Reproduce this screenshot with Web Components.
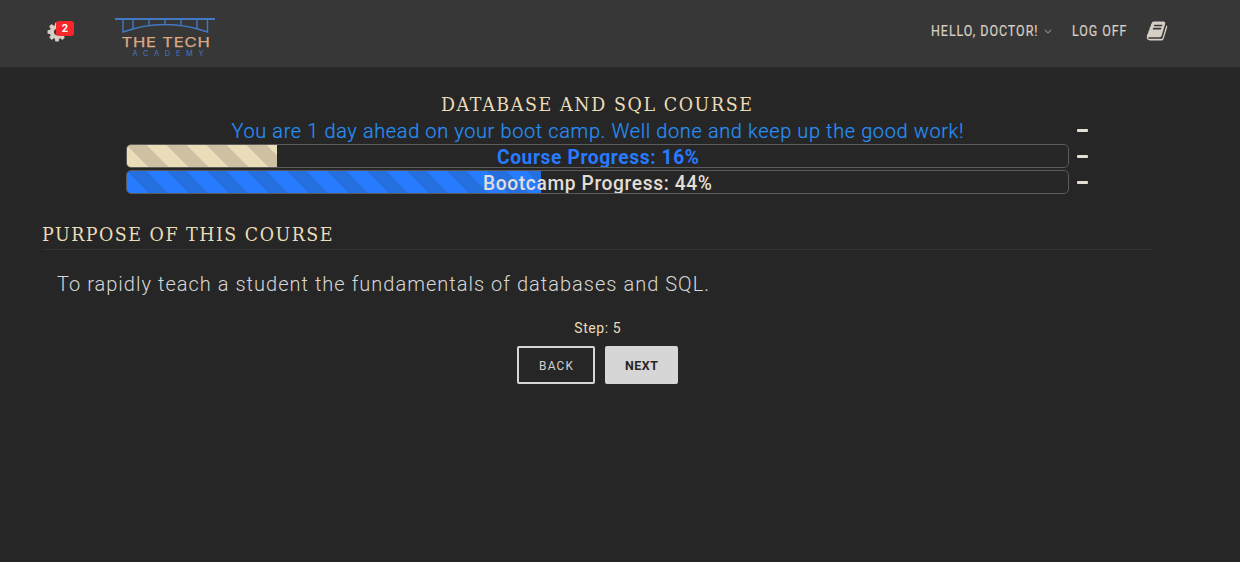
<!DOCTYPE html>
<html lang="en">
<head>
<meta charset="utf-8">
<title>Database and SQL Course</title>
<style>
html,body{margin:0;height:100%;background:#262626}
body{font-family:Roboto,"Liberation Sans",sans-serif;color:#d8d2c8}
</style>
</head>
<body>
<course-page></course-page>
<script>
const define = (name, html, setup) => customElements.define(name, class extends HTMLElement {
  connectedCallback() {
    if (this.shadowRoot) return;
    const t = document.createElement('template');
    t.innerHTML = html;
    this.attachShadow({mode: 'open'}).append(t.content.cloneNode(true));
    if (setup) setup(this, this.shadowRoot);
  }
});

/* Text tracked evenly to a given line width; "condense" narrows the glyphs */
define('tracked-text', `<style>:host{display:inline-block;white-space:nowrap}span{display:inline-block;transform-origin:0 50%}</style><span><slot></slot></span>`, (el, root) => {
  const span = root.querySelector('span'), w = +el.getAttribute('width');
  const s = +(el.getAttribute('condense') || 1);
  const n = el.textContent.length;
  const gap = (w / s - span.getBoundingClientRect().width) / (n - 1);
  span.style.letterSpacing = gap + 'px';
  if (s !== 1) span.style.transform = `scaleX(${s})`;
  el.style.width = w + 'px';
});

define('notice-gear', `<style>
:host{display:block;position:relative;width:28px;height:24px}
svg{display:block;width:22px;height:22px;margin-left:-1px;fill:#d8cfc4}
b{position:absolute;left:9px;top:0;width:18px;height:15px;border-radius:3px;background:#f9262a;color:#fff;font-size:11px;line-height:15px;text-align:center}
</style><svg viewBox="0 0 1792 1792"><path d="M1152 896q0-106-75-181t-181-75-181 75-75 181 75 181 181 75 181-75 75-181zm512-109v222q0 12-8 23t-20 13l-185 28q-19 54-39 91 35 50 107 138 10 12 10 25t-9 23q-27 37-99 108t-94 71q-12 0-26-9l-138-108q-44 23-91 38-16 136-29 186-7 28-36 28h-222q-14 0-24.500-8.500t-11.500-21.500l-28-184q-49-16-90-37l-141 107q-10 9-25 9-14 0-25-11-126-114-165-168-7-10-7-23 0-12 8-23 15-21 51-66.500t54-70.500q-27-50-41-99l-183-27q-13-2-21-12.500t-8-23.500v-222q0-12 8-23t19-13l186-28q14-46 39-92-40-57-107-138-10-12-10-24 0-10 9-23 26-36 98.500-107.500t94.500-71.500q13 0 26 10l138 107q44-23 91-38 16-136 29-186 7-28 36-28h222q14 0 24.500 8.500t11.500 21.500l28 184q49 16 90 37l142-107q9-9 24-9 13 0 25 10 129 119 165 170 7 8 7 22 0 12-8 23-15 21-51 66.500t-54 70.500q26 50 41 98l183 28q13 2 21 12.500t8 23.500z"/></svg><b><slot></slot></b>`);

define('academy-logo', `<style>
:host{display:block;width:100px;height:44px}
svg{display:block;overflow:visible}
</style><svg width="100" height="44" viewBox="0 0 100 44">
<g fill="none" stroke="#4279c4" stroke-width="1.400"><path d="M0 4H100" stroke-width="1.800"/><path d="M8 4V17Q50 2 92.500 17V4M18 4V13M34 4V10M50 4V9.500M66 4V10M82 4V13"/></g>
<text x="6.500" y="32" font-family="Inter,sans-serif" font-size="12.800" fill="#dba986" stroke="#dba986" stroke-width=".25" textLength="89" lengthAdjust="spacingAndGlyphs" letter-spacing=".6">THE TECH</text>
<text x="17.500" y="41" font-family="Inter,sans-serif" font-size="7.400" fill="#4279c4" textLength="71">ACADEMY</text>
</svg>`);

define('book-icon', `<style>:host{display:block}svg{display:block;fill:#d8cfc4}</style><svg width="22" height="22" viewBox="0 0 1792 1792"><path d="M1703 478q40 57 18 129l-275 906q-19 64-76.500 107.500t-122.500 43.500h-923q-77 0-148.500-53.500t-99.500-131.500q-24-67-2-127 0-4 3-27t4-37q1-8-3-21.500t-3-19.500q2-11 8-21t16.500-23.500 16.500-23.500q23-38 45-91.500t30-91.500q3-10 .5-30t-.5-28q3-11 17-28t17-23q21-36 42-92t25-90q1-9-2.500-32t.5-28q4-13 22-30.500t22-22.500q19-26 42.500-84.500t27.500-96.500q1-8-3-25.500t-2-26.500q2-8 9-18t18-23 17-21q8-12 16.500-30.500t15-35 16-36 19.500-32 26.500-23.500 36-11.500 47.500 5.500l-1 3q38-9 51-9h761q74 0 114 56t18 130l-274 906q-36 119-71.500 153.500t-128.500 34.500h-869q-27 0-38 15-11 16-1 43 24 70 144 70h923q29 0 56-15.500t35-41.500l300-987q7-22 5-57 38 15 59 43zm-1064 2q-4 13 2 22.500t20 9.500h608q13 0 25.500-9.500t16.500-22.500l21-64q4-13-2-22.500t-20-9.500h-608q-13 0-25.500 9.500t-16.500 22.500zm-83 256q-4 13 2 22.500t20 9.500h608q13 0 25.500-9.500t16.500-22.500l21-64q4-13-2-22.500t-20-9.500h-608q-13 0-25.500 9.500t-16.500 22.500z"/></svg>`);

define('top-bar', `<style>
:host{display:flex;align-items:flex-start;box-sizing:border-box;height:68px;padding-left:47px;background:#373737;border-bottom:1px solid #2c2c2c}
notice-gear{margin-top:21px}
academy-logo{margin:15px 0 0 40px}
nav{display:flex;margin-left:716px;font-size:14px;-webkit-text-stroke:.2px #d8cfc4;line-height:20px;color:#d8cfc4;padding-top:21px}
.chev{display:block;margin:8px 0 0 6px}
.off{margin-left:20px}
book-icon{margin-left:20px;margin-top:-1px}
</style>
<notice-gear>2</notice-gear><academy-logo></academy-logo>
<nav><tracked-text width="106.500" condense=".89">HELLO, DOCTOR!</tracked-text><svg class="chev" width="8" height="6" viewBox="0 0 8 6"><path d="M1 1l3 3 3-3" fill="none" stroke="#85817c" stroke-width="1.200"/></svg><tracked-text class="off" width="54.500" condense=".89">LOG OFF</tracked-text><book-icon></book-icon></nav>`);

define('status-row', `<style>
:host{display:grid;grid-template-columns:943px 11px;column-gap:8px;height:26px}
.body{display:flex;justify-content:center}
i{height:3px;margin-top:11px;background:#e3ded6;border-radius:1px}
</style><div class="body"><slot></slot></div><i></i>`);

define('progress-bar', `<style>
:host{display:grid;box-sizing:border-box;width:943px;height:24px;border:1px solid #5c5c5c;border-radius:5px;overflow:hidden;font-size:20px;line-height:24px}
.fill,.label{grid-area:1/1}
.fill{background-color:var(--fill);background-image:linear-gradient(45deg,rgba(38,38,38,.15) 25%,transparent 25%,transparent 50%,rgba(38,38,38,.15) 50%,rgba(38,38,38,.15) 75%,transparent 75%);background-size:40px 40px}
.label{justify-self:center}
</style><div class="fill"></div><div class="label"><slot></slot></div>`, (el, root) => {
  root.querySelector('.fill').style.width = `round(down, ${el.getAttribute('value')}%, 1px)`;
});

define('step-button', `<style>
:host{display:block}
button{display:flex;align-items:center;justify-content:center;width:100%;height:38px;padding:0 0 1px;border:2px solid #d6d6d6;border-radius:2px;background:none;color:#d0d0d0;font:400 13.500px Roboto,sans-serif}
:host([primary]) button{background:#d6d6d6;color:#262626;font-weight:700}
</style><button><slot></slot></button>`);

define('course-page', `<style>
:host{display:block}
h1,h2{margin:0;font:400 18.800px/26px "DejaVu Serif",serif;color:#ebdcb9}
h1{margin-top:24px;display:flex;justify-content:center;width:1193px}
.rows{margin-left:126px}
.msg{font-size:20px;line-height:26px;font-weight:300;color:#258ff5;-webkit-text-stroke:.2px #258ff5}
.a{font-weight:700;color:#287bff}.b{font-weight:500;color:#e3ded6}
section{width:1111px;margin:26px 0 0 42px}
h2{height:27px;border-bottom:1px solid #333}
p{margin:21px 0 0 15px;font-size:20px;line-height:26px;font-weight:300;color:#d8d8d8}
footer{width:1195px;display:flex;flex-direction:column;align-items:center;margin-top:21px}
.step{font-size:14px;line-height:20px;color:#ebdcb9}
.btns{display:grid;grid-template-columns:78px 73px;gap:10px;margin-top:8px}
</style>
<top-bar></top-bar>
<main>
<h1><tracked-text width="311" condense=".93">DATABASE AND SQL COURSE</tracked-text></h1>
<div class="rows">
<status-row><div class="msg"><tracked-text width="732">You are 1 day ahead on your boot camp. Well done and keep up the good work!</tracked-text></div></status-row>
<status-row><progress-bar value="16" style="--fill:#ebdcb9"><tracked-text class="a" width="202" condense=".96">Course Progress: 16%</tracked-text></progress-bar></status-row>
<status-row><progress-bar value="44" style="--fill:#267bff"><tracked-text class="b" width="229" condense=".96">Bootcamp Progress: 44%</tracked-text></progress-bar></status-row>
</div>
<section><h2><tracked-text width="290.500" condense=".93">PURPOSE OF THIS COURSE</tracked-text></h2>
<p><tracked-text width="652">To rapidly teach a student the fundamentals of databases and SQL.</tracked-text></p></section>
<footer><div class="step"><tracked-text width="46.500">Step: 5</tracked-text></div>
<div class="btns"><step-button><tracked-text width="34" condense=".88">BACK</tracked-text></step-button><step-button primary><tracked-text width="33" condense=".92">NEXT</tracked-text></step-button></div></footer>
</main>`);
</script>
</body>
</html>
